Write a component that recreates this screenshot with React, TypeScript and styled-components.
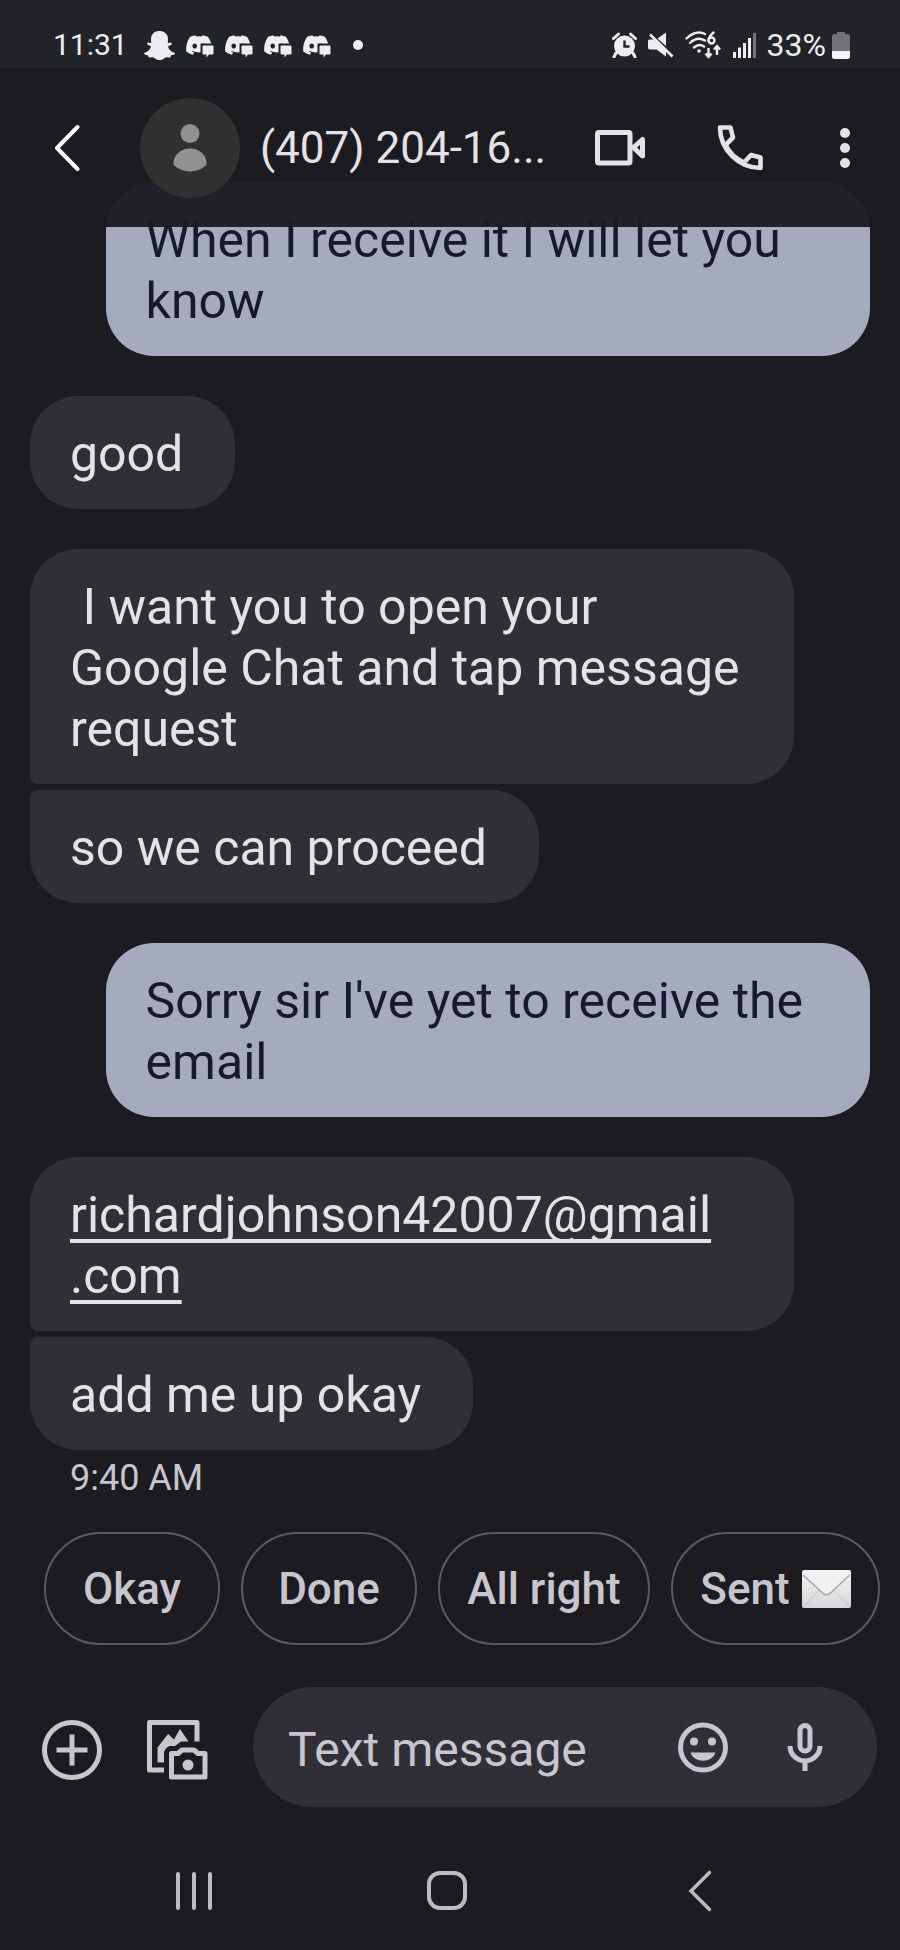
import React from 'react';
import styled, { createGlobalStyle, css } from 'styled-components';
import { FaSnapchatGhost, FaDiscord } from 'react-icons/fa';

const color = {
  page: '#1c1b20',
  status: '#222328',
  incoming: '#302f35',
  outgoing: '#a6aabf',
  text: '#e4e1e9',
  textDark: '#171a2c',
  muted: '#c7c5cd',
  outline: '#5b5a61',
  avatar: '#303030',
  avatarIcon: '#919191',
};

const GlobalStyle = createGlobalStyle`
  * { box-sizing: border-box; }
  html, body { margin: 0; background: ${color.page}; }
  body { font-family: Roboto, sans-serif; color: ${color.text}; }
  button { font: inherit; color: inherit; background: none; border: 0; padding: 0; cursor: pointer; }
  svg { display: block; flex: none; }
`;

const Screen = styled.div`
  display: flex;
  flex-direction: column;
  min-height: 100vh;
  background: ${color.page};
`;

/* ---------- status bar ---------- */

const StatusBar = styled.div`
  display: flex;
  align-items: center;
  justify-content: space-between;
  height: 68px;
  padding: 22px 50px 0 53px;
  background: ${color.status};
  color: #eeedf2;
`;

const StatusGroup = styled.div<{ $gap: number }>`
  display: flex;
  align-items: center;
  gap: ${(p) => p.$gap}px;
`;

const Clock = styled.span`
  margin-right: 6px;
  font-size: 30px;
  line-height: 32px;
`;

const BatteryText = styled.span`
  font-size: 32px;
  line-height: 32px;
`;

const NotificationDot = styled.span`
  width: 10px;
  height: 10px;
  margin-left: 12px;
  border-radius: 50%;
  background: currentColor;
`;

/* ---------- conversation header ---------- */

const Header = styled.header`
  position: sticky;
  top: 0;
  z-index: 1;
  display: flex;
  align-items: center;
  height: 159px;
  padding: 0 10px 0 45px;
  background: rgba(28, 27, 32, 0.96);
`;

const IconButton = styled.button<{ $width?: number }>`
  display: flex;
  flex: none;
  align-items: center;
  justify-content: center;
  width: ${(p) => p.$width ?? 60}px;
  height: 60px;
`;

const Avatar = styled.div`
  display: flex;
  flex: none;
  align-items: center;
  justify-content: center;
  width: 100px;
  height: 100px;
  margin-left: 51px;
  border-radius: 50%;
  background: ${color.avatar};
`;

const Title = styled.h1`
  flex: 1;
  margin: 0 0 0 20px;
  font-size: 44px;
  font-weight: 400;
  line-height: 60px;
  white-space: nowrap;
`;

const HeaderActions = styled.div`
  display: flex;
  align-items: center;
`;

/* ---------- messages ---------- */

const Thread = styled.main`
  display: flex;
  flex: 1;
  flex-direction: column;
  gap: 40px;
  margin-top: -45px;
  padding: 0 30px;
`;

const Group = styled.section<{ $sent?: boolean }>`
  display: flex;
  flex-direction: column;
  align-items: ${(p) => (p.$sent ? 'flex-end' : 'flex-start')};
  gap: 6px;
`;

const flatTop = css`border-top-left-radius: 8px;`;
const flatBottom = css`border-bottom-left-radius: 8px;`;

const Bubble = styled.p<{ $sent?: boolean; $position?: 'first' | 'last' }>`
  max-width: 91%;
  margin: 0;
  padding: 28px 52px 24px 40px;
  border-radius: 48px;
  background: ${(p) => (p.$sent ? color.outgoing : color.incoming)};
  color: ${(p) => (p.$sent ? color.textDark : color.text)};
  font-size: 50px;
  line-height: 61px;
  white-space: pre-wrap;
  ${(p) => p.$position === 'first' && flatBottom}
  ${(p) => p.$position === 'last' && flatTop}
`;

const MailLink = styled.a`
  color: inherit;
  text-decoration: underline;
  text-decoration-thickness: 4px;
  text-decoration-skip-ink: none;
  text-underline-offset: 7px;
`;

const Time = styled.time`
  margin-left: 40px;
  color: ${color.muted};
  font-size: 36px;
  line-height: 44px;
`;

/* ---------- quick replies ---------- */

const Replies = styled.div`
  display: flex;
  gap: 21px;
  padding: 32px 20px 42px 44px;
`;

const Chip = styled.button`
  display: flex;
  align-items: center;
  justify-content: center;
  gap: 12px;
  height: 113px;
  min-width: 176px;
  padding: 0 28px;
  border: 2px solid ${color.outline};
  border-radius: 57px;
  color: ${color.muted};
  font-size: 44px;
  font-weight: 500;
  line-height: 52px;
  white-space: nowrap;
`;

/* ---------- composer ---------- */

const Composer = styled.form`
  display: flex;
  align-items: center;
  padding: 0 23px 0 42px;
  color: ${color.muted};
`;

const ComposerTools = styled.div`
  display: flex;
  gap: 45px;
  padding-top: 6px;
`;

const Field = styled.div`
  display: flex;
  flex: 1;
  align-items: center;
  min-width: 0;
  height: 120px;
  margin-left: 46px;
  padding: 0 42px 0 35px;
  border-radius: 60px;
  background: ${color.incoming};
`;

const TextInput = styled.input`
  flex: 1;
  min-width: 0;
  height: 64px;
  padding: 4px 0 0;
  border: 0;
  outline: 0;
  background: none;
  color: ${color.text};
  font: 48px/60px Roboto, sans-serif;
  &::placeholder { color: ${color.muted}; opacity: 1; }
`;

const FieldActions = styled.div`
  display: flex;
  gap: 42px;
`;

/* ---------- system navigation ---------- */

const SystemNav = styled.nav`
  display: grid;
  grid-template-columns: repeat(3, 1fr);
  align-items: center;
  justify-items: center;
  height: 143px;
  padding: 24px 74px 0 68px;
  color: #bdbbc1;
`;

/* ---------- icons ---------- */

const DiscordMark = () => (
  <svg width="29" height="26" viewBox="0 0 29 26">
    <FaDiscord x="0" y="-1" size={28} />
    <path d="M15.500 11.500H29V26H15.500Z" fill={color.status} />
    <path d="M18.500 13.500h9a1 1 0 0 1 1 1v7a1 1 0 0 1-1 1h-3.500l-2.500 3v-3h-3a1 1 0 0 1-1-1v-7a1 1 0 0 1 1-1z" fill="currentColor" />
  </svg>
);

const AlarmIcon = () => (
  <svg width="25" height="26" viewBox="0 0 25 26" fill="currentColor">
    <circle cx="12.500" cy="14" r="10.500" />
    <path d="M4 21l-2 4M21 21l2 4M1.500 6.500l5-4.500M23.500 6.500l-5-4.500" stroke="currentColor" strokeWidth="3" strokeLinecap="round" />
    <path d="M12.500 8.500v6h5" fill="none" stroke={color.status} strokeWidth="2.400" />
  </svg>
);

const MuteIcon = () => (
  <svg width="26" height="26" viewBox="0 0 26 26" fill="currentColor">
    <path d="M0 9q0-1.500 1.500-1.500h4L18 19v5.500L8.500 17.500H2Q0 17.500 0 15.500z" />
    <path d="M9.500 6.500L18 .5v13.500z" />
    <path d="M2 2.500L24.500 24.500" stroke="currentColor" strokeWidth="2.600" />
  </svg>
);

const WifiIcon = () => (
  <svg width="37" height="28" viewBox="0 0 37 28" fill="none" stroke="currentColor" strokeWidth="2.400" strokeLinecap="round">
    <path d="M1.500 7.500Q11 -1.500 20 3M5 12Q12 5 20 9.500M9 16.500Q14 12 19 15.500" />
    <circle cx="14" cy="20" r="1.800" fill="currentColor" stroke="none" />
    <path d="M28.500 1.500Q23.500 6 23.500 9.500" />
    <circle cx="26.500" cy="9.500" r="3" />
    <path d="M23.500 17v8M20.500 22.500l3 3.500 3-3.500M32 24v-8M29 18.500l3-3.500 3 3.500" strokeLinecap="butt" />
  </svg>
);

const SignalIcon = () => (
  <svg width="23" height="25" viewBox="0 0 23 25" fill="currentColor">
    <path d="M0 19h3v6h-3zM5 14.500h3v10.500h-3zM10 10h3v15h-3zM15 5h3v20h-3z" />
    <path d="M20 0h3v25h-3z" opacity=".4" />
  </svg>
);

const BatteryIcon = () => (
  <svg width="18" height="27" viewBox="0 0 18 27">
    <path d="M5 0h8v2h2.500A2.500 2.500 0 0 1 18 4.500V19H0V4.500A2.500 2.500 0 0 1 2.500 2H5z" fill="#707075" />
    <path d="M0 19h18v5.500a2.500 2.500 0 0 1-2.500 2.500h-13A2.500 2.500 0 0 1 0 24.500z" fill="#f3f2f6" />
  </svg>
);

const BackIcon = () => (
  <svg width="26" height="48" viewBox="0 0 26 48" fill="none" stroke="#fff" strokeWidth="4" strokeLinecap="round" strokeLinejoin="round">
    <path d="M23.500 3L3 24l20.500 21" />
  </svg>
);

const PersonIcon = () => (
  <svg width="34" height="48" viewBox="0 0 34 48" fill={color.avatarIcon}>
    <circle cx="17" cy="9.500" r="9.500" />
    <path d="M.5 41V38C2 29 9 24.500 17 24.500S32 29 33.500 38v3Q26 47.500 17 47.500T.5 41z" />
  </svg>
);

const VideoIcon = () => (
  <svg width="50" height="36" viewBox="0 0 50 36" fill="none" stroke="currentColor" strokeWidth="5" strokeLinejoin="round">
    <rect x="2.500" y="2.500" width="32.500" height="30.500" rx="1.500" />
    <path d="M38.500 17.500L47.500 9.500V26z" strokeWidth="5" />
  </svg>
);

const PhoneIcon = () => (
  <svg width="46" height="46" viewBox="0 0 46 46" fill="none" stroke="currentColor" strokeWidth="4.600" strokeLinejoin="round">
    <path d="M3 2.500H13.500L16 12.500L8.500 20A38 38 0 0 0 27 37.500L34 30L43.500 32.500V43C22 43 3 25 3 2.500z" />
  </svg>
);

const MoreIcon = () => (
  <svg width="10" height="42" viewBox="0 0 10 42" fill="currentColor">
    <circle cx="5" cy="6" r="5" /><circle cx="5" cy="21" r="5" /><circle cx="5" cy="36" r="5" />
  </svg>
);

const EnvelopeIcon = () => (
  <svg width="49" height="38" viewBox="0 0 49 38">
    <defs>
      <linearGradient id="paper" x1="0" y1="0" x2="0" y2="1">
        <stop offset="0" stopColor="#f4f4f5" />
        <stop offset="1" stopColor="#d6d6da" />
      </linearGradient>
    </defs>
    <rect width="49" height="38" rx="2" fill="url(#paper)" />
    <path d="M1.500 36.500L17 20M47.500 36.500L32 20" stroke="#c6c6ca" strokeWidth="1" />
    <path d="M1 1.500h47L29 21.500q-4.500 5.500-9 0L1 1.500z" fill="#f0f0f0" />
    <path d="M1 5L20 22.500q4.500 4.500 9 0L48 5" fill="none" stroke="#aaaaae" strokeWidth="1.500" />
  </svg>
);

const PlusIcon = () => (
  <svg width="60" height="60" viewBox="0 0 60 60" fill="none" stroke="currentColor" strokeWidth="5">
    <circle cx="30" cy="30" r="27.500" />
    <path d="M30 14.500v31M14.500 30h31" />
  </svg>
);

const GalleryIcon = () => (
  <svg width="61" height="60" viewBox="0 0 61 60" fill="none" stroke="currentColor" strokeWidth="5" strokeLinejoin="round">
    <path d="M50 21.500V2.500H2.500V50H17" />
    <path d="M10.500 42.500V27.500L21 14l6 5.500L33 9l8.500 12.500H34L28 26H23q-4 1-6 6v10.500z" fill="currentColor" stroke="none" />
    <path d="M24.500 33.500h6.500l4-3.500h12l4 3.500h7V57H24.500z" />
    <circle cx="41" cy="45" r="5.500" fill="currentColor" stroke="none" />
  </svg>
);

const EmojiIcon = () => (
  <svg width="50" height="51" viewBox="0 0 50 51" fill="currentColor">
    <circle cx="25" cy="25.500" r="22.500" fill="none" stroke="currentColor" strokeWidth="5" />
    <circle cx="16" cy="19.500" r="4" /><circle cx="34" cy="19.500" r="4" />
    <path d="M12.500 30.500h25a12.800 10.500 0 0 1-25 0z" />
  </svg>
);

const MicIcon = () => (
  <svg width="36" height="48" viewBox="0 0 36 48" fill="none" stroke="currentColor" strokeWidth="5">
    <rect x="13" y="2.500" width="10" height="25.500" rx="5" />
    <path d="M3 23a15 15 0 0 0 30 0M18 37.500V48" />
  </svg>
);

const RecentsIcon = () => (
  <svg width="36" height="38" viewBox="0 0 36 38" stroke="currentColor" strokeWidth="4" strokeLinecap="round">
    <path d="M2 2v34M18 2v34M34 2v34" />
  </svg>
);

const HomeIcon = () => (
  <svg width="40" height="40" viewBox="0 0 40 40" fill="none" stroke="currentColor" strokeWidth="4">
    <rect x="2" y="2" width="36" height="35" rx="11" />
  </svg>
);

const NavBackIcon = () => (
  <svg width="24" height="42" viewBox="0 0 24 42" fill="none" stroke="currentColor" strokeWidth="3.500" strokeLinecap="round">
    <path d="M21.500 2.500L3 21l18.500 18.500" />
  </svg>
);

/* ---------- page ---------- */

export default function App() {
  return (
    <Screen>
      <GlobalStyle />
      <StatusBar>
        <StatusGroup $gap={10}>
          <Clock>11:31</Clock>
          <FaSnapchatGhost size={31} />
          <DiscordMark />
          <DiscordMark />
          <DiscordMark />
          <DiscordMark />
          <NotificationDot />
        </StatusGroup>
        <StatusGroup $gap={11}>
          <AlarmIcon />
          <MuteIcon />
          <WifiIcon />
          <SignalIcon />
          <StatusGroup $gap={6}>
            <BatteryText>33%</BatteryText>
            <BatteryIcon />
          </StatusGroup>
        </StatusGroup>
      </StatusBar>

      <Header>
        <IconButton type="button" aria-label="Back" $width={44}><BackIcon /></IconButton>
        <Avatar><PersonIcon /></Avatar>
        <Title>(407) 204-16...</Title>
        <HeaderActions>
          <IconButton type="button" aria-label="Video call" $width={120}><VideoIcon /></IconButton>
          <IconButton type="button" aria-label="Call" $width={120}><PhoneIcon /></IconButton>
          <IconButton type="button" aria-label="More options" $width={90}><MoreIcon /></IconButton>
        </HeaderActions>
      </Header>

      <Thread>
        <Group $sent>
          <Bubble $sent>When I receive it I will let you know</Bubble>
        </Group>
        <Group>
          <Bubble>good</Bubble>
        </Group>
        <Group>
          <Bubble $position="first"> I want you to open your Google Chat and tap message request</Bubble>
          <Bubble $position="last">so we can proceed</Bubble>
        </Group>
        <Group $sent>
          <Bubble $sent>Sorry sir I've yet to receive the email</Bubble>
        </Group>
        <Group>
          <Bubble $position="first">
            <MailLink href="mailto:richardjohnson42007@gmail.com">richardjohnson42007@gmail<wbr />.com</MailLink>
          </Bubble>
          <Bubble $position="last">add me up okay</Bubble>
          <Time>9:40 AM</Time>
        </Group>
      </Thread>

      <Replies>
        <Chip type="button">Okay</Chip>
        <Chip type="button">Done</Chip>
        <Chip type="button">All right</Chip>
        <Chip type="button">Sent <EnvelopeIcon /></Chip>
      </Replies>

      <Composer onSubmit={(e) => e.preventDefault()}>
        <ComposerTools>
          <IconButton type="button" aria-label="Add attachment"><PlusIcon /></IconButton>
          <IconButton type="button" aria-label="Gallery and camera"><GalleryIcon /></IconButton>
        </ComposerTools>
        <Field>
          <TextInput type="text" aria-label="Text message" placeholder="Text message" />
          <FieldActions>
            <IconButton type="button" aria-label="Emoji"><EmojiIcon /></IconButton>
            <IconButton type="button" aria-label="Voice message"><MicIcon /></IconButton>
          </FieldActions>
        </Field>
      </Composer>

      <SystemNav>
        <IconButton type="button" aria-label="Recent apps"><RecentsIcon /></IconButton>
        <IconButton type="button" aria-label="Home"><HomeIcon /></IconButton>
        <IconButton type="button" aria-label="System back"><NavBackIcon /></IconButton>
      </SystemNav>
    </Screen>
  );
}
